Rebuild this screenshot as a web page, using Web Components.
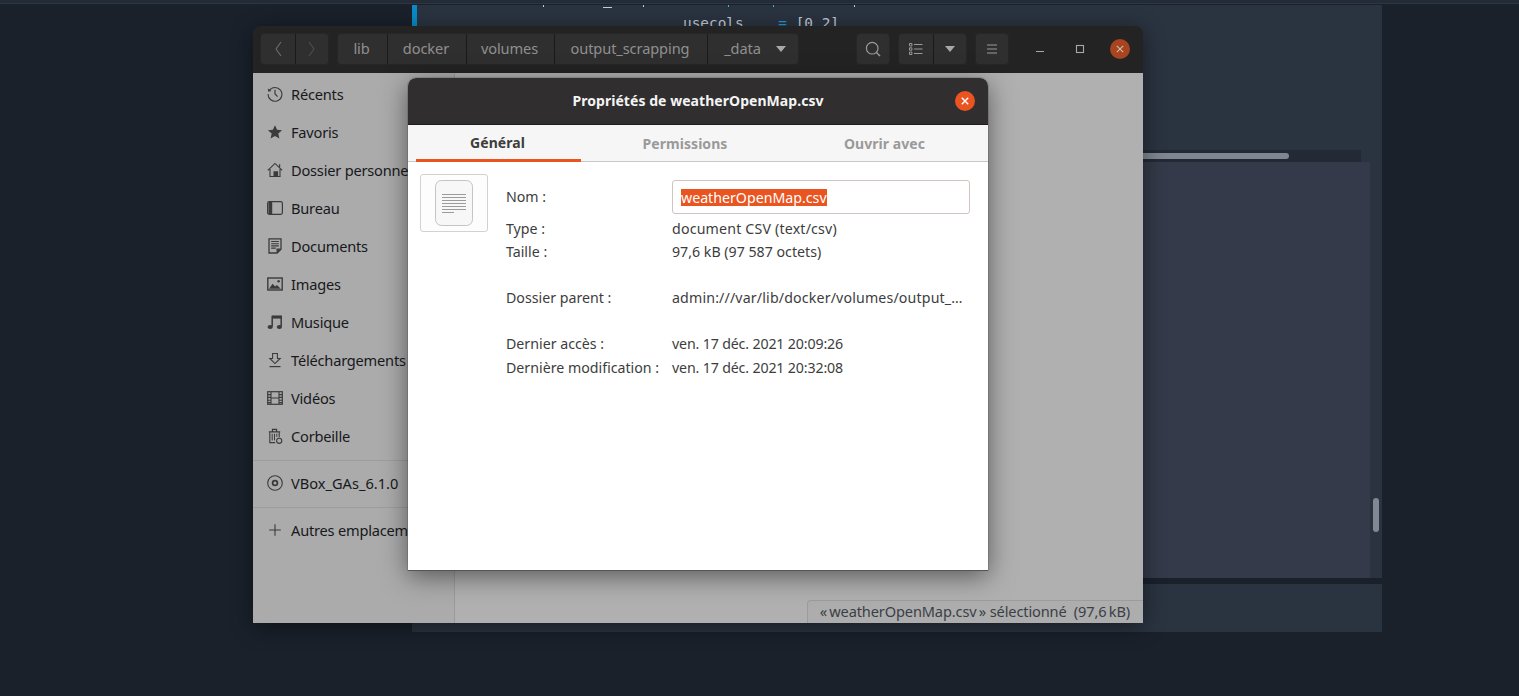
<!DOCTYPE html>
<html lang="fr">
<head>
<meta charset="utf-8">
<title>Propriétés de weatherOpenMap.csv</title>
<style>
  html, body { margin: 0; height: 100%; overflow: hidden; background: #1a212b; }
  body { font-family: "Noto Sans", "Open Sans", sans-serif; }
</style>
</head>
<body>

<desktop-view>
  <editor-backdrop></editor-backdrop>
  <file-window>
    <path-bar slot="header"></path-bar>
    <nav-sidebar slot="side">
      <side-item icon="recent">Récents</side-item>
      <side-item icon="star">Favoris</side-item>
      <side-item icon="home">Dossier personnel</side-item>
      <side-item icon="desktop">Bureau</side-item>
      <side-item icon="docs">Documents</side-item>
      <side-item icon="images">Images</side-item>
      <side-item icon="music">Musique</side-item>
      <side-item icon="download">Téléchargements</side-item>
      <side-item icon="video">Vidéos</side-item>
      <side-item icon="trash">Corbeille</side-item>
      <side-item divider icon="disc"><span style="letter-spacing:0">VBox_GAs_6.1.0</span></side-item>
      <side-item divider icon="plus">Autres emplacements</side-item>
    </nav-sidebar>
    <span slot="status">«&#8239;weatherOpenMap.csv&#8239;» sélectionné&nbsp; (97,6&#8239;kB)</span>
  </file-window>
  <props-dialog>
    <prop-row slot="rows" label="Type :"><span style="letter-spacing:.18px">document CSV (text/csv)</span></prop-row>
    <prop-row slot="rows" label="Taille :">97,6 kB (97 587 octets)</prop-row>
    <prop-row slot="rows" spaced label="Dossier parent :"><span style="letter-spacing:.15px">admin:///var/lib/docker/volumes/output_…</span></prop-row>
    <prop-row slot="rows" spaced label="Dernier accès :"><span style="letter-spacing:-.15px">ven. 17 déc. 2021 20:09:26</span></prop-row>
    <prop-row slot="rows" tight label="Dernière modification :"><span style="letter-spacing:-.15px">ven. 17 déc. 2021 20:32:08</span></prop-row>
  </props-dialog>
</desktop-view>

<script>
// Symbolic icons for the sidebar, 16x16
const ICONS = {
  recent: '<path d="M2.2 4.6A6.9 6.9 0 1 1 1.1 8" fill="none" stroke="currentColor" stroke-width="1.1"/><path d="M.8 2.4l.4 3.4 3.3-.7z" fill="currentColor"/><path d="M8 3.8V8l2.6 2.6" fill="none" stroke="currentColor" stroke-width="1.2"/>',
  star: '<path d="M8 1.2l2.1 4.6 5 .5-3.8 3.3 1.1 4.9L8 12l-4.4 2.5 1.1-4.9L.9 6.3l5-.5z" fill="currentColor"/>',
  home: '<path d="M.8 8.4L8 1.4l7.2 7M3 7v7.5h10V7" fill="none" stroke="currentColor" stroke-width="1.1"/><path d="M6.5 9.2h4.6v5.6H6.5z" fill="currentColor"/><path d="M12 2.2h1.2v3H12z" fill="currentColor"/>',
  desktop: '<rect x=".6" y="1.6" width="14.8" height="12.8" rx="1.8" fill="none" stroke="currentColor" stroke-width="1.2"/><path d="M1.5 2h3.7v12H1.5z" fill="currentColor"/>',
  docs: '<path d="M2 .8h12v10.4L10.2 15H2z" fill="none" stroke="currentColor" stroke-width="1.3"/><path d="M4.2 3.5h7.6M4.2 5.7h7.6M4.2 7.9h7.6M4.2 10.1h4.6" stroke="currentColor" stroke-width="1.1"/><path d="M9.5 10.5H14L9.5 15z" fill="currentColor"/>',
  images: '<rect x=".8" y="2" width="14.4" height="12" fill="none" stroke="currentColor" stroke-width="1.4"/><path d="M2 12.8l3.6-5 2.6 2.6 1.7-1.4 3.9 3.8z" fill="currentColor"/><circle cx="11.6" cy="5.2" r="1.2" fill="currentColor"/>',
  music: '<path d="M5.2 12.6V2.4h9v10.2" fill="none" stroke="currentColor" stroke-width="1.5"/><path d="M5 1.6h9.9v3H5z" fill="currentColor"/><ellipse cx="3.2" cy="13" rx="2.6" ry="2" fill="currentColor"/><ellipse cx="12.4" cy="13" rx="2.6" ry="2" fill="currentColor"/>',
  download: '<path d="M5.6 1.5h4.8v5h2.8L8 11.6 2.8 6.5h2.8z" fill="none" stroke="currentColor" stroke-width="1.1"/><path d="M2.5 14.6h11" stroke="currentColor" stroke-width="1.2"/>',
  video: '<rect x=".7" y="1.7" width="14.6" height="12.6" fill="none" stroke="currentColor" stroke-width="1.2"/><path d="M4 2v12M12 2v12M4 8h8M.8 4.6H4M.8 7.4H4M.8 10.2H4M.8 12.6H4M12 4.6h3.2M12 7.4h3.2M12 10.2h3.2M12 12.6h3.2" stroke="currentColor" stroke-width="1.1"/>',
  trash: '<path d="M1.8 3.8h11.4M5.5 3.5V1.4h4v2.1" fill="none" stroke="currentColor" stroke-width="1.3"/><path d="M2.8 4.2v10.4h5.4M12.2 4.2v5" fill="none" stroke="currentColor" stroke-width="1.1"/><path d="M5.2 5.8v6.6M7.5 5.8v6.6M9.8 5.8v3" stroke="currentColor" stroke-width="1"/><circle cx="12.2" cy="12.8" r="2.6" fill="none" stroke="currentColor" stroke-width="1.1"/>',
  disc: '<circle cx="8" cy="8" r="7.3" fill="none" stroke="currentColor" stroke-width="1.1"/><circle cx="8" cy="8" r="2.4" fill="none" stroke="currentColor" stroke-width="1.8"/>',
  plus: '<path d="M8 2.2v11.6M2.2 8h11.6" stroke="currentColor" stroke-width="1.1"/>'
};

class DesktopView extends HTMLElement {
  constructor() {
    super();
    this.attachShadow({mode: 'open'}).innerHTML = `
    <style>
      :host { display: block; position: relative; width: 100%; height: 100vh; overflow: hidden; background: #1a212b; }
      .strip { height: 3px; background: #232b36; border-bottom: 1px solid #2c3644; }
    </style>
    <div class="strip"></div>
    <slot></slot>`;
  }
}

class EditorBackdrop extends HTMLElement {
  constructor() {
    super();
    this.attachShadow({mode: 'open'}).innerHTML = `
    <style>
      :host { position: absolute; left: 412px; top: 5px; width: 970px; height: 627px; display: flex; flex-direction: column; background: #2a3340; color: #c3cbd6; }
      .code { height: 145px; position: relative; flex: none; overflow: hidden; }
      .marker { position: absolute; left: 0; top: 0; width: 5px; height: 21px; background: #0a8ac6; }
      .tips { position: absolute; left: 0; top: 0; display: block; }
      pre { margin: 0; position: absolute; left: 271px; top: 9px; font: 14.4px/18px "DejaVu Sans Mono", monospace; }
      pre b { font-weight: 400; color: #1e9ad6; }
      .track { height: 12px; flex: none; width: 949px; background: #232a36; display: flex; align-items: center; }
      .thumb { width: 877px; height: 6px; background: #7f8791; border-radius: 0 3px 3px 0; }
      .lower { flex: 1; display: flex; }
      .panel { flex: 1; background: #343a49; }
      .gutter { width: 12px; flex: none; background: #2b3240; display: flex; justify-content: center; padding-top: 336px; box-sizing: border-box; }
      .gutter i { display: block; width: 6px; height: 34px; border-radius: 3px; background: #7f8893; }
      .gap { height: 6px; flex: none; background: #1a212b; }
      .foot { height: 48px; flex: none; background: #2a3340; }
    </style>
    <div class="code"><div class="marker"></div>
      <!-- bottoms of the line scrolled above the top edge -->
      <svg class="tips" width="460" height="4">
        <rect x="131" y="0" width="1" height="2" fill="#c3cbd6"/>
        <rect x="191" y="2" width="9" height="1" fill="#c3cbd6"/>
        <rect x="231" y="0" width="1" height="2" fill="#c3cbd6"/>
        <rect x="316" y="0" width="1" height="2" fill="#4fb5a0"/>
        <rect x="361" y="0" width="1" height="2" fill="#4fb5a0"/>
        <rect x="442" y="0" width="1" height="2" fill="#c3cbd6"/>
      </svg>
      <pre>usecols    <b>=</b> [0,2]</pre>
    </div>
    <div class="track"><div class="thumb"></div></div>
    <div class="lower"><div class="panel"></div><div class="gutter"><i></i></div></div>
    <div class="gap"></div>
    <div class="foot"></div>`;
  }
}

class FileWindow extends HTMLElement {
  constructor() {
    super();
    this.attachShadow({mode: 'open'}).innerHTML = `
    <style>
      :host { position: absolute; left: 253px; top: 26px; width: 890px; height: 597px; display: flex; flex-direction: column; border-radius: 8px 8px 0 0; overflow: hidden; box-shadow: 0 4px 22px rgba(0,0,0,.45); }
      header { height: 47px; flex: none; background: #242323; }
      .body { flex: 1; display: flex; min-height: 0; position: relative; background: #b0b0b0; }
      .side { width: 201px; flex: none; background: #ababab; border-right: 1px solid #9b9b9b; }
      .status { position: absolute; right: 0; bottom: 0; height: 23px; box-sizing: border-box; padding: 0 13px 2px 12px; display: flex; align-items: center; background: #adadad; border: 1px solid #9c9c9c; border-width: 1px 0 0 1px; border-radius: 4px 0 0 0; color: #3a3f46; font-size: 14.6px; letter-spacing: -.14px; white-space: nowrap; }
    </style>
    <header><slot name="header"></slot></header>
    <div class="body">
      <div class="side"><slot name="side"></slot></div>
      <div class="status"><slot name="status"></slot></div>
    </div>`;
  }
}

class PathBar extends HTMLElement {
  constructor() {
    super();
    this.attachShadow({mode: 'open'}).innerHTML = `
    <style>
      :host { display: flex; height: 47px; align-items: center; padding-left: 7px; box-sizing: border-box; color: #8f8f8f; font-size: 14.6px; letter-spacing: -.1px; }
      .group { display: flex; height: 32px; margin-top: -1px; background: #302f2f; border: 1px solid #272626; box-sizing: border-box; border-radius: 4px; }
      .group > * { display: flex; align-items: center; justify-content: center; box-sizing: border-box; }
      .group > * + * { border-left: 1px solid #1b1a1a; }
      svg { display: block; }
      .nav, .view, .search { margin-right: 8px; }
      .menu { margin-right: 11px; }
      .crumbs { margin-right: 57px; }
      .crumbs > * { padding: 0 2px 3px 0; }
      .crumbs i { margin-bottom: -3px; }
      .w1 { width: 32px; } .w2 { width: 34px; } .w3 { width: 33px; }
      .controls { display: flex; margin-top: -1px; } .controls > * { width: 40px; display: flex; justify-content: center; align-items: center; }
      .arrow { width: 0; height: 0; border: 5px solid transparent; border-top: 6px solid #a8a8a8; border-bottom: 0; }
    </style>
    <div class="group nav">
      <span class="w2"><svg width="12" height="18" viewBox="0 0 12 18"><path d="M9 2L4 9l5 7" fill="none" stroke="#6d6d6d" stroke-width="1.1"/></svg></span>
      <span class="w3"><svg width="12" height="18" viewBox="0 0 12 18"><path d="M3 2l5 7-5 7" fill="none" stroke="#4f4f4f" stroke-width="1.1"/></svg></span>
    </div>
    <div class="group crumbs">
      <span style="width:49px">lib</span>
      <span style="width:79px">docker</span>
      <span style="width:88px">volumes</span>
      <span style="width:153px">output_scrapping</span>
      <span style="width:91px;gap:15px;padding-left:4px;padding-right:0">_data<i class="arrow"></i></span>
    </div>
    <div class="group search"><span class="w1"><svg width="18" height="18" viewBox="0 0 18 18"><circle cx="8.2" cy="8.2" r="5.8" fill="none" stroke="#9a9a9a" stroke-width="1.2"/><path d="M12.4 12.4l3.6 3.6" stroke="#9a9a9a" stroke-width="1.4"/></svg></span></div>
    <div class="group view">
      <span class="w2"><svg width="14" height="12" viewBox="0 0 14 12"><path d="M.5.5h2.4v2.4H.5zM.5 4.8h2.4v2.4H.5zM.5 9.1h2.4v2.4H.5z" fill="none" stroke="#9a9a9a"/><path d="M5 1.5h8.5M5 6h8.5M5 10.5h8.5" stroke="#9a9a9a" stroke-width="1.2"/></svg></span>
      <span class="w3"><i class="arrow"></i></span>
    </div>
    <div class="group menu"><span class="w1"><svg width="12" height="10" viewBox="0 0 12 10"><path d="M1 1h10M1 5h10M1 9h10" stroke="#9a9a9a" stroke-width="1.1"/></svg></span></div>
    <div class="controls">
      <span><svg width="10" height="10" viewBox="0 0 10 10"><path d="M1 7.5h8" stroke="#a8a8a8" stroke-width="1.2"/></svg></span>
      <span><svg width="10" height="10" viewBox="0 0 10 10"><rect x="1.5" y="1.5" width="7" height="7" fill="none" stroke="#a8a8a8" stroke-width="1.1"/></svg></span>
      <span><svg width="20" height="20" viewBox="0 0 20 20"><circle cx="10" cy="10" r="10" fill="#a8441f"/><path d="M6.8 6.8l6.4 6.4M13.2 6.8l-6.4 6.4" stroke="#c9b8b0" stroke-width="1.2"/></svg></span>
    </div>`;
  }
}

class NavSidebar extends HTMLElement {
  constructor() {
    super();
    this.attachShadow({mode: 'open'}).innerHTML = `
    <style>:host { display: block; padding-top: 3px; color: #17191c; font-size: 14.6px; letter-spacing: -.2px; }</style>
    <slot></slot>`;
  }
}

class SideItem extends HTMLElement {
  constructor() {
    super();
    this.attachShadow({mode: 'open'}).innerHTML = `
    <style>
      :host { display: block; }
      :host([divider]) { border-top: 1px solid #9d9d9d; margin-top: 4px; padding-top: 4px; }
      .row { display: flex; align-items: center; height: 38px; box-sizing: border-box; padding: 0 0 2px 14px; gap: 8px; white-space: nowrap; }
      svg { width: 16px; height: 16px; flex: none; color: #3b3b3b; }
    </style>
    <div class="row"><svg viewBox="0 0 16 16"></svg><span><slot></slot></span></div>`;
    this.shadowRoot.querySelector('svg').innerHTML = ICONS[this.getAttribute('icon')] || '';
  }
}

class PropsDialog extends HTMLElement {
  constructor() {
    super();
    this.attachShadow({mode: 'open'}).innerHTML = `
    <style>
      :host { position: absolute; left: 408px; top: 78px; width: 580px; height: 492px; display: flex; flex-direction: column; background: #fff; border-radius: 8px 8px 0 0; box-shadow: 0 1px 0 #555, 0 0 0 1px rgba(0,0,0,.12), 0 6px 26px rgba(0,0,0,.5); }
      .title { height: 47px; flex: none; box-sizing: border-box; padding-bottom: 2px; border-radius: 8px 8px 0 0; background: #302e2e; border-bottom: 1px solid #1e1d1d; display: flex; align-items: center; justify-content: center; position: relative; color: #f4f4f4; font-weight: 700; font-size: 14px; letter-spacing: .05px; }
      .close { position: absolute; right: 13px; top: 13px; display: block; }
      .tabs { height: 37px; flex: none; box-sizing: border-box; background: #f6f6f6; border-bottom: 1px solid #c8c8c8; display: flex; padding: 0 8px; font-weight: 700; font-size: 14px; color: #9a9a9a; letter-spacing: .05px; }
      .tabs span { display: flex; align-items: center; justify-content: center; flex: none; box-sizing: border-box; height: 37px; }
      .tabs .on { color: #3d3d3d; border-bottom: 3px solid #e95420; padding-right: 2px; }
      .main { display: flex; padding: 12px 18px 0 12px; gap: 18px; }
      .thumb { width: 68px; height: 58px; flex: none; box-sizing: border-box; border: 1px solid #d2d2d2; border-radius: 3px; background: #fdfdfd; display: flex; align-items: center; justify-content: center; }
      .info { flex: 1; min-width: 0; padding-top: 6px; color: #3d3d3d; font-size: 14.2px; }
      .name { display: flex; height: 34px; margin-bottom: 3px; }
      .name label { width: 166px; flex: none; align-self: center; padding-bottom: 2px; }
      .entry { flex: 1; box-sizing: border-box; border: 1px solid #cfc4c0; border-radius: 3px; padding-left: 8px; display: flex; align-items: center; }
      .entry span { background: #e95420; color: #fff; line-height: 17px; padding: 0; }
    </style>
    <div class="title">Propriétés de weatherOpenMap.csv
      <svg class="close" width="20" height="20" viewBox="0 0 20 20"><circle cx="10" cy="10" r="10" fill="#e95420"/><path d="M6.8 6.8l6.4 6.4M13.2 6.8l-6.4 6.4" stroke="#fff" stroke-width="1.4"/></svg>
    </div>
    <div class="tabs">
      <span class="on" style="width:165px">Général</span>
      <span style="width:208px">Permissions</span>
      <span style="width:191px">Ouvrir avec</span>
    </div>
    <div class="main">
      <div class="thumb">
        <svg width="40" height="48" viewBox="0 0 40 48">
          <rect x="1.5" y="1.5" width="37" height="45" rx="6" fill="#f7f7f7" stroke="#c4c4c4"/>
          <path d="M8 15.5h24M8 18.5h24M8 21.5h24M8 24.5h24M8 27.5h24M8 30.5h24M8 33.5h12" stroke="#9b9b9b"/>
        </svg>
      </div>
      <div class="info">
        <div class="name"><label>Nom :</label><div class="entry"><span>weatherOpenMap.csv</span></div></div>
        <slot name="rows"></slot>
      </div>
    </div>`;
  }
}

class PropRow extends HTMLElement {
  constructor() {
    super();
    this.attachShadow({mode: 'open'}).innerHTML = `
    <style>
      :host { display: flex; height: 23px; align-items: center; white-space: nowrap; }
      :host([spaced]) { margin-top: 23px; }
      :host([tight]) { margin-top: 1px; }
      .label { width: 166px; flex: none; }
    </style>
    <div class="label"></div><div><slot></slot></div>`;
    this.shadowRoot.querySelector('.label').textContent = this.getAttribute('label');
  }
}

customElements.define('desktop-view', DesktopView);
customElements.define('editor-backdrop', EditorBackdrop);
customElements.define('file-window', FileWindow);
customElements.define('path-bar', PathBar);
customElements.define('nav-sidebar', NavSidebar);
customElements.define('side-item', SideItem);
customElements.define('props-dialog', PropsDialog);
customElements.define('prop-row', PropRow);
</script>
</body>
</html>
